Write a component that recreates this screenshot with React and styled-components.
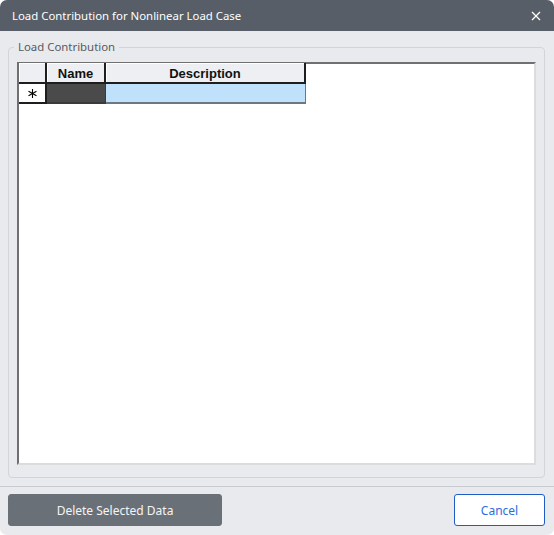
import React from "react";
import styled, { createGlobalStyle } from "styled-components";

const Global = createGlobalStyle`
  html, body { margin: 0; padding: 0; background: #ffffff; }
  * { box-sizing: border-box; }
`;

const Window = styled.div`
  width: 554px;
  height: 535px;
  background: #e9eaed;
  border-radius: 7px;
  overflow: hidden;
  display: flex;
  flex-direction: column;
  font-family: "Noto Sans", "Liberation Sans", sans-serif;
`;

const TitleBar = styled.div`
  height: 31px;
  flex: none;
  background: #575e67;
  color: #ffffff;
  display: flex;
  align-items: center;
  justify-content: space-between;
  padding: 0 11px 0 12px;
  font-size: 11.4px;
`;

const CloseButton = styled.button`
  border: none;
  background: transparent;
  padding: 0;
  width: 14px;
  height: 14px;
  display: flex;
  align-items: center;
  justify-content: center;
  cursor: pointer;
`;

const Body = styled.div`
  flex: 1;
  padding: 16px 9px 8px 8px;
  display: flex;
  flex-direction: column;
`;

const Group = styled.div`
  position: relative;
  flex: 1;
  border: 1px solid #d2d4d8;
  border-radius: 4px;
  padding: 14px 8px 12px 8px;
  display: flex;
`;

const GroupLabel = styled.span`
  position: absolute;
  top: -9px;
  left: 5px;
  padding: 0 4px;
  background: #e9eaed;
  color: #555a60;
  font-size: 11.4px;
  line-height: 16px;
`;

const GridArea = styled.div`
  flex: 1;
  background: #ffffff;
  border-top: 2px solid #707070;
  border-left: 2px solid #707070;
  border-right: 2px solid #dcdcdc;
  border-bottom: 2px solid #dcdcdc;
`;

const Table = styled.div`
  display: grid;
  grid-template-columns: 28px 59px 200px;
  grid-template-rows: 21px 20px;
  width: max-content;
  margin-top: -1px;
`;

const HeaderCell = styled.div`
  background: #eeeff2;
  border-right: 2px solid #1e1e1e;
  border-bottom: 2px solid #1e1e1e;
  box-shadow: inset 1px 1px 0 #ffffff;
  font-family: "Liberation Sans", Arial, sans-serif;
  font-weight: bold;
  font-size: 13px;
  color: #111;
  display: flex;
  align-items: center;
  justify-content: center;
  padding-top: 2px;
`;

const RowHeader = styled.div`
  background: #ffffff;
  border-right: 2px solid #1e1e1e;
  border-bottom: 2px solid #1e1e1e;
  display: flex;
  align-items: center;
  justify-content: center;
`;

const DataCell = styled.div`
  background: ${(p) => p.$bg};
  border-right: 1px solid ${(p) => p.$line};
  border-bottom: 2px solid ${(p) => p.$line};
`;

const Footer = styled.div`
  flex: none;
  border-top: 1px solid #c8cbcf;
  padding: 7px 9px 9px 8px;
  display: flex;
  justify-content: space-between;
  align-items: center;
`;

const Button = styled.button`
  height: 32px;
  width: ${(p) => p.$width}px;
  border-radius: 3px;
  font-family: "Noto Sans", "Liberation Sans", sans-serif;
  font-size: 12px;
  cursor: pointer;
  background: ${(p) => (p.$primary ? "#ffffff" : "#6a7078")};
  color: ${(p) => (p.$primary ? "#2a6ee0" : "#f4f5f6")};
  border: 1px solid ${(p) => (p.$primary ? "#1f5cc6" : "#6a7078")};
  padding: 0;
`;

function Asterisk() {
  return (
    <svg width="9" height="9" viewBox="0 0 9 9">
      <g stroke="#000" strokeWidth="1.1" strokeLinecap="square">
        <line x1="4.5" y1="0.5" x2="4.5" y2="8.5" />
        <line x1="1" y1="2.5" x2="8" y2="6.5" />
        <line x1="1" y1="6.5" x2="8" y2="2.5" />
      </g>
    </svg>
  );
}

export default function App() {
  return (
    <>
      <Global />
      <Window>
        <TitleBar>
          <span>Load Contribution for Nonlinear Load Case</span>
          <CloseButton aria-label="Close">
            <svg width="10" height="10" viewBox="0 0 10 10">
              <path d="M1 1 L9 9 M9 1 L1 9" stroke="#ffffff" strokeWidth="1.3" />
            </svg>
          </CloseButton>
        </TitleBar>
        <Body>
          <Group>
            <GroupLabel>Load Contribution</GroupLabel>
            <GridArea>
              <Table>
                <HeaderCell />
                <HeaderCell>Name</HeaderCell>
                <HeaderCell>Description</HeaderCell>
                <RowHeader>
                  <Asterisk />
                </RowHeader>
                <DataCell $bg="#4a4a4a" $line="#3a3a3a" />
                <DataCell $bg="#bfe1fb" $line="#6c7780" />
              </Table>
            </GridArea>
          </Group>
        </Body>
        <Footer>
          <Button $width={214}>Delete Selected Data</Button>
          <Button $primary $width={91}>Cancel</Button>
        </Footer>
      </Window>
    </>
  );
}
